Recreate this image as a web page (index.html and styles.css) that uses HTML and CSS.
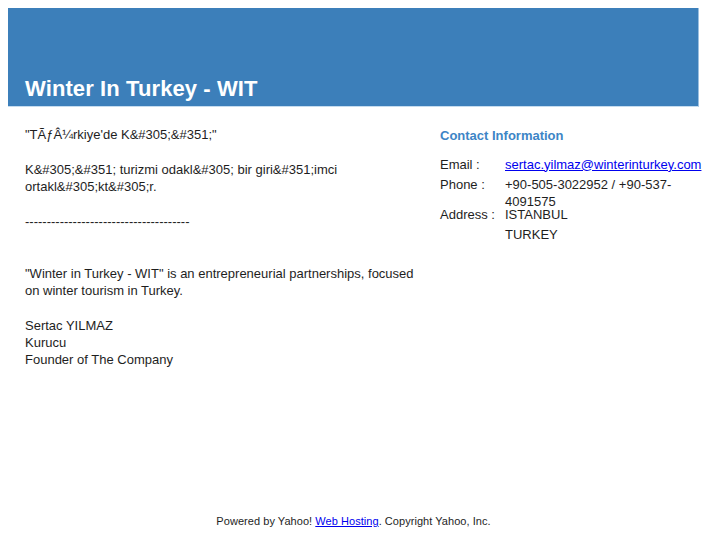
FILE: index.html
```html
<!DOCTYPE html>
<html>
<head>
<meta charset="utf-8">
<title>Winter In Turkey - WIT</title>
<link rel="stylesheet" href="styles.css">
</head>
<body>
<div class="page">
  <div class="header">
    <h1 class="title">Winter In Turkey - WIT</h1>
  </div>
  <div class="content">
    <div class="left">
      <p>"TÃƒÂ¼rkiye'de K&amp;#305;&amp;#351;"</p>
      <p>K&amp;#305;&amp;#351; turizmi odakl&amp;#305; bir giri&amp;#351;imci ortakl&amp;#305;kt&amp;#305;r.</p>
      <p>--------------------------------------</p>
      <p class="spacer"><br></p>
      <p>"Winter in Turkey - WIT" is an entrepreneurial partnerships, focused on winter tourism in Turkey.</p>
      <p>Sertac YILMAZ<br>Kurucu<br>Founder of The Company</p>
    </div>
    <div class="right">
      <h2 class="contact-title">Contact Information</h2>
      <div class="contact">
        <div class="row r-email"><span class="label">Email :</span><span class="value"><a href="#">sertac.yilmaz@winterinturkey.com</a></span></div>
        <div class="row r-phone"><span class="label">Phone :</span><span class="value">+90-505-3022952 / +90-537-4091575</span></div>
        <div class="row"><span class="label">Address :</span><span class="value">ISTANBUL</span></div>
        <div class="row"><span class="label"></span><span class="value">TURKEY</span></div>
      </div>
    </div>
  </div>
  <div class="footer">Powered by Yahoo! <a href="#">Web Hosting</a>. Copyright Yahoo, Inc.</div>
</div>
</body>
</html>
```
FILE: styles.css
```css
html, body {
  margin: 0;
  padding: 0;
  background: #ffffff;
}
body {
  padding: 8px;
  font-family: "Liberation Sans", Arial, sans-serif;
  color: #1e1e1e;
}
.page {
  width: 691px;
}
.header {
  height: 98px;
  background: #3c7fba;
  border-right: 1px solid #9cc0e0;
  border-bottom: 1px solid #c5dcef;
  width: 690px;
  display: flex;
  align-items: flex-end;
  box-sizing: content-box;
}
.title {
  margin: 0 0 4px 17px;
  color: #ffffff;
  font-size: 22px;
  font-weight: bold;
  line-height: 26px;
  letter-spacing: 0.1px;
}
.content {
  display: flex;
  height: 388px;
  padding-top: 19px;
  box-sizing: content-box;
}
.left {
  width: 400px;
  padding-left: 17px;
  font-size: 13px;
  line-height: 17px;
}
.left p {
  margin: 0 0 18px 0;
}
.left p.spacer {
  margin: 0;
}
.right {
  margin-left: 15px;
  font-size: 13px;
  line-height: 17px;
}
.contact-title {
  margin: 1px 0 10px 0;
  font-size: 13px;
  line-height: 17px;
  color: #3d85c6;
  font-weight: bold;
}
.contact .row {
  display: flex;
  height: 20px;
}
.contact .row.r-phone {
  height: 30px;
}
.label {
  width: 65px;
  padding-top: 1.5px;
  flex: none;
}
.value {
  width: 180px;
  padding-top: 1.5px;
  flex: none;
}
a {
  color: #0000ee;
  text-decoration: underline;
}
.footer {
  text-align: center;
  font-size: 11px;
  line-height: 14px;
  color: #1e1e1e;
  letter-spacing: 0.05px;
}
```
